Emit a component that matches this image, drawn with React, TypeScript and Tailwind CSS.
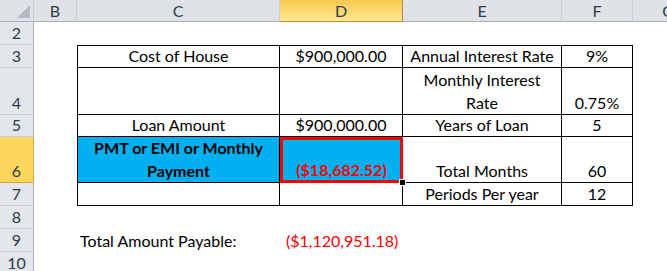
const font = { fontFamily: "Lato, 'Liberation Sans', sans-serif" };

function ColHead({ label, active }: { label: string; active?: boolean }) {
  return (
    <div
      className={
        active
          ? "flex items-center justify-center border-r border-b border-[#c2893a] bg-gradient-to-b from-[#f8c84f] to-[#ffe88e] text-[#2e3a48] text-[16px]"
          : "flex items-center justify-center border-r border-b border-r-[#c8cdd4] border-b-[#a9b1bb] bg-[#dfe3e8] text-[#2e3a48] text-[16px]"
      }
    >
      {label}
    </div>
  );
}

function RowHead({ label, active }: { label: string; active?: boolean }) {
  return (
    <div
      className={
        (active
          ? "border-r border-b border-[#d9a441] bg-[#fed65e] "
          : "border-r border-b border-r-[#a9b1bb] border-b-[#c8cdd4] bg-[#e3e6ea] ") +
        "flex items-end justify-center leading-[23px] text-[16px] text-[#2e3a48]"
      }
    >
      {label}
    </div>
  );
}

function Cell({
  children,
  top,
  left,
  className = "",
}: {
  children?: React.ReactNode;
  top?: boolean;
  left?: boolean;
  className?: string;
}) {
  return (
    <div
      className={
        "flex items-end justify-center text-center border-r border-b border-black leading-[23px] text-[16px] text-black px-1 " +
        (top ? "border-t " : "") +
        (left ? "border-l " : "") +
        className
      }
    >
      <span>{children}</span>
    </div>
  );
}

export default function App() {
  return (
    <div className="w-[667px] h-[271px] overflow-hidden bg-white" style={font}>
      <div className="grid grid-cols-[34px_43px_203px_123px_159px_71px_71px] grid-rows-[22px_23px_23px_47px_22px_46px_23px_23px_23px_23px]">
        {/* header row */}
        <div className="relative border-r border-b border-r-[#c8cdd4] border-b-[#a9b1bb] bg-[#dfe3e8]">
          <svg className="absolute right-[3px] bottom-[3px]" width="13" height="13" viewBox="0 0 13 13">
            <polygon points="13,0 13,13 0,13" fill="#b4bac2" />
          </svg>
        </div>
        <ColHead label="B" />
        <ColHead label="C" />
        <ColHead label="D" active />
        <ColHead label="E" />
        <ColHead label="F" />
        <ColHead label="G" />

        {/* row 2 */}
        <RowHead label="2" />
        <div className="col-span-6" />

        {/* row 3 */}
        <RowHead label="3" />
        <div />
        <Cell top left>Cost of House</Cell>
        <Cell top>$900,000.00</Cell>
        <Cell top>Annual Interest Rate</Cell>
        <Cell top>9%</Cell>
        <div />

        {/* row 4 */}
        <RowHead label="4" />
        <div />
        <Cell left />
        <Cell />
        <Cell className="px-4">Monthly Interest Rate</Cell>
        <Cell>0.75%</Cell>
        <div />

        {/* row 5 */}
        <RowHead label="5" />
        <div />
        <Cell left className="leading-[22px]">Loan Amount</Cell>
        <Cell className="leading-[22px]">$900,000.00</Cell>
        <Cell className="leading-[22px]">Years of Loan</Cell>
        <Cell className="leading-[22px]">5</Cell>
        <div />

        {/* row 6 */}
        <RowHead label="6" active />
        <div />
        <Cell left className="bg-[#00b0f0] font-bold leading-[22px] px-3">
          PMT or EMI or Monthly Payment
        </Cell>
        <div className="relative flex items-end justify-center border-[3px] border-[#ff0000] bg-[#00b0f0] text-[16px] leading-[21px] font-bold text-[#ff0000]">
          <span>($18,682.52)</span>
          <div className="absolute right-[-6px] bottom-[-6px] w-[7px] h-[7px] bg-black border border-white" />
        </div>
        <Cell className="leading-[22px]">Total Months</Cell>
        <Cell className="leading-[22px]">60</Cell>
        <div />

        {/* row 7 */}
        <RowHead label="7" />
        <div />
        <Cell left />
        <Cell />
        <Cell>Periods Per year</Cell>
        <Cell>12</Cell>
        <div />

        {/* row 8 */}
        <RowHead label="8" />
        <div className="col-span-6" />

        {/* row 9 */}
        <RowHead label="9" />
        <div />
        <div className="flex items-end pl-[3px] leading-[23px] text-[16px] text-black whitespace-nowrap">
          Total Amount Payable:
        </div>
        <div className="flex items-end pl-[6px] leading-[23px] text-[16px] text-[#ff0000] whitespace-nowrap col-span-2">
          ($1,120,951.18)
        </div>
        <div className="col-span-2" />

        {/* row 10 */}
        <RowHead label="10" />
        <div className="col-span-6" />
      </div>
    </div>
  );
}
